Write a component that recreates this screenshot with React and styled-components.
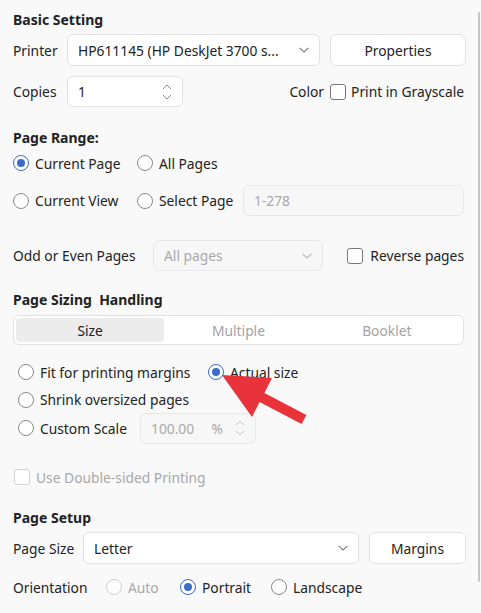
import React from "react";
import styled, { createGlobalStyle } from "styled-components";

const Global = createGlobalStyle`
  html, body { margin: 0; padding: 0; background: #f9f9f9; }
  body {
    font-family: "Noto Sans", "Open Sans", sans-serif;
    font-size: 13.8px;
    color: #1e1e1e;
  }
`;

const Page = styled.div`
  position: relative;
  width: 481px;
  height: 613px;
  overflow: hidden;
  box-sizing: border-box;
  padding: 10px 17px 0 13px;
  display: flex;
  flex-direction: column;
`;

const Title = styled.div`
  height: 20px;
  line-height: 20px;
  font-weight: 700;
  font-size: 14px;
  color: #222;
  margin-top: ${(p) => p.$mt || 0}px;
`;

const Row = styled.div`
  display: flex;
  align-items: center;
  height: ${(p) => p.$h || 24}px;
  margin-top: ${(p) => p.$mt || 0}px;
  padding-left: ${(p) => p.$indent || 0}px;
`;

const Label = styled.span`
  width: ${(p) => (p.$w ? `${p.$w}px` : "auto")};
  flex: none;
  white-space: nowrap;
  color: #222;
`;

const Field = styled.div`
  box-sizing: border-box;
  width: ${(p) => p.$w}px;
  height: ${(p) => p.$h || 31}px;
  flex: none;
  display: flex;
  align-items: center;
  padding: 0 10px;
  border: 1px solid ${(p) => (p.$disabled ? "#e8e8e8" : "#e2e2e2")};
  border-radius: 6px;
  background: ${(p) => (p.$disabled ? "#f7f7f7" : "#ffffff")};
  color: ${(p) => (p.$disabled ? "#a9a9a9" : "#222")};
  white-space: nowrap;
`;

const FieldText = styled.span`
  flex: 1;
  overflow: hidden;
`;

const Unit = styled.span`
  margin-right: 12px;
`;

const Button = styled.div`
  box-sizing: border-box;
  width: ${(p) => p.$w}px;
  height: 32px;
  margin-left: 10px;
  flex: none;
  display: flex;
  align-items: center;
  justify-content: center;
  border: 1px solid #e2e2e2;
  border-radius: 6px;
  background: #fff;
  color: #222;
`;

const Choice = styled.label`
  display: flex;
  align-items: center;
  gap: ${(p) => p.$gap || 6}px;
  width: ${(p) => (p.$w ? `${p.$w}px` : "auto")};
  flex: none;
  white-space: nowrap;
  color: ${(p) => (p.$disabled ? "#a8a8a8" : "#222")};
`;

const RadioDot = styled.span`
  box-sizing: border-box;
  width: 16px;
  height: 16px;
  border-radius: 50%;
  flex: none;
  background: #fff;
  border: ${(p) =>
    p.$on ? "1.5px solid #3a6cc8" : p.$disabled ? "1px solid #cdcdcd" : "1px solid #8a8a8a"};
  display: flex;
  align-items: center;
  justify-content: center;
  &::after {
    content: "";
    width: 8px;
    height: 8px;
    border-radius: 50%;
    background: ${(p) => (p.$on ? "#3a6cc8" : "transparent")};
  }
`;

const Box = styled.span`
  box-sizing: border-box;
  width: 16px;
  height: 16px;
  border-radius: 3px;
  flex: none;
  background: #fff;
  border: 1px solid ${(p) => (p.$disabled ? "#d2d2d2" : "#777")};
`;

const Spacer = styled.div`
  flex: 1;
`;

const ColorLabel = styled(Label)`
  margin-right: 6px;
`;

const Segmented = styled.div`
  box-sizing: border-box;
  height: 30px;
  margin-top: 5px;
  padding: 2px;
  display: grid;
  grid-template-columns: repeat(3, 1fr);
  border: 1px solid #e2e2e2;
  border-radius: 6px;
  background: #fff;
`;

const Segment = styled.div`
  display: flex;
  align-items: center;
  justify-content: center;
  border-radius: 4px;
  background: ${(p) => (p.$active ? "#ececec" : "transparent")};
  color: ${(p) => (p.$active ? "#222" : "#a3a3a3")};
`;

const Scrollbar = styled.div`
  position: absolute;
  right: 1px;
  top: 12px;
  width: 2px;
  height: 570px;
  background: #c6c6c6;
  border-radius: 1px;
`;

const Pointer = styled.svg`
  position: absolute;
  left: 0;
  top: 0;
  pointer-events: none;
`;

const Chevron = ({ color = "#7a7a7a" }) => (
  <svg width="10" height="6" viewBox="0 0 10 6" style={{ flex: "none" }}>
    <path d="M0.5 0.8 L5 5 L9.5 0.8" fill="none" stroke={color} strokeWidth="1.1" />
  </svg>
);

const Spin = ({ color = "#8a8a8a" }) => (
  <svg width="10" height="18" viewBox="0 0 10 18" style={{ flex: "none" }}>
    <path d="M1 6 L5 2 L9 6" fill="none" stroke={color} strokeWidth="1" />
    <path d="M1 12 L5 16 L9 12" fill="none" stroke={color} strokeWidth="1" />
  </svg>
);

const Radio = ({ on, disabled, w, children }) => (
  <Choice $w={w} $disabled={disabled}>
    <RadioDot $on={on} $disabled={disabled} />
    {children}
  </Choice>
);

const Check = ({ disabled, children, gap }) => (
  <Choice $disabled={disabled} $gap={gap}>
    <Box $disabled={disabled} />
    {children}
  </Choice>
);

export default function App() {
  return (
    <>
      <Global />
      <Page>
        <Title>Basic Setting</Title>
        <Row $h={32} $mt={4}>
          <Label $w={54}>Printer</Label>
          <Field $w={253} $h={32}>
            <FieldText>HP611145 (HP DeskJet 3700 s...</FieldText>
            <Chevron />
          </Field>
          <Button $w={136}>Properties</Button>
        </Row>
        <Row $h={31} $mt={10}>
          <Label $w={54}>Copies</Label>
          <Field $w={116}>
            <FieldText>1</FieldText>
            <Spin />
          </Field>
          <Spacer />
          <ColorLabel>Color</ColorLabel>
          <Check gap={5}>Print in Grayscale</Check>
        </Row>

        <Title $mt={21}>Page Range:</Title>
        <Row $mt={3}>
          <Radio on w={124}>Current Page</Radio>
          <Radio>All Pages</Radio>
        </Row>
        <Row $h={31} $mt={10}>
          <Radio w={124}>Current View</Radio>
          <Radio w={106}>Select Page</Radio>
          <Field $w={221} $disabled>
            <FieldText>1-278</FieldText>
          </Field>
        </Row>
        <Row $h={31} $mt={24}>
          <Label $w={140}>Odd or Even Pages</Label>
          <Field $w={170} $disabled>
            <FieldText>All pages</FieldText>
            <Chevron color="#b8b8b8" />
          </Field>
          <Spacer />
          <Check gap={7}>Reverse pages</Check>
        </Row>

        <Title $mt={19}>Page Sizing&nbsp; Handling</Title>
        <Segmented>
          <Segment $active>Size</Segment>
          <Segment>Multiple</Segment>
          <Segment>Booklet</Segment>
        </Segmented>
        <Row $h={28} $mt={13} $indent={5}>
          <Radio w={190}>Fit for printing margins</Radio>
          <Radio on>Actual size</Radio>
        </Row>
        <Row $h={27} $indent={5}>
          <Radio>Shrink oversized pages</Radio>
        </Row>
        <Row $h={30} $indent={5}>
          <Radio w={122}>Custom Scale</Radio>
          <Field $w={116} $disabled>
            <FieldText>100.00</FieldText>
            <Unit>%</Unit>
            <Spin color="#c4c4c4" />
          </Field>
        </Row>
        <Row $mt={22} $indent={1}>
          <Check disabled>Use Double-sided Printing</Check>
        </Row>

        <Title $mt={19}>Page Setup</Title>
        <Row $h={32} $mt={4}>
          <Label $w={70}>Page Size</Label>
          <Field $w={276} $h={32}>
            <FieldText>Letter</FieldText>
            <Chevron />
          </Field>
          <Button $w={97}>Margins</Button>
        </Row>
        <Row $mt={11}>
          <Label $w={93}>Orientation</Label>
          <Radio disabled w={74}>Auto</Radio>
          <Radio on w={91}>Portrait</Radio>
          <Radio>Landscape</Radio>
        </Row>

        <Scrollbar />
        <Pointer width="481" height="613" viewBox="0 0 481 613">
          <polygon
            points="222,375 272,378 264.4,393.1 306.4,415.1 301.6,423.9 259.6,401.9 252,417"
            fill="#e8333a"
          />
        </Pointer>
      </Page>
    </>
  );
}
